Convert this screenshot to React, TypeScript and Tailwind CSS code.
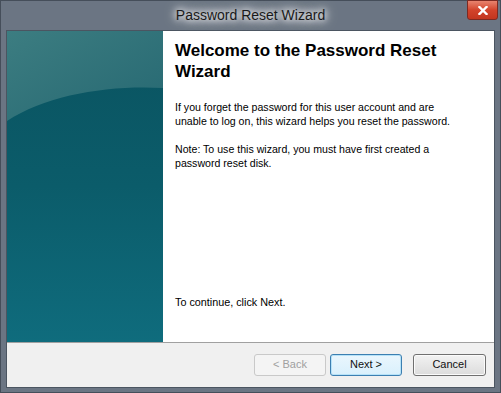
const ui = { fontFamily: '"Liberation Sans", Arial, sans-serif' };

function Btn({ label, disabled, focused }: { label: string; disabled?: boolean; focused?: boolean }) {
  return (
    <div
      className={
        'flex h-[22px] items-center justify-center rounded-[3px] border text-[11px] ' +
        (disabled
          ? 'border-[#c9c9c9] bg-[#f4f4f4] text-[#a0a0a0]'
          : focused
            ? 'border-[#3c7fb1] bg-gradient-to-b from-[#eaf6fd] to-[#d9f0fc] text-[#111] shadow-[inset_0_0_0_1px_#b6e2f8]'
            : 'border-[#707070] bg-gradient-to-b from-[#f2f2f2] to-[#dcdcdc] text-[#111] shadow-[inset_0_0_0_1px_#fbfbfb]')
      }
      style={{ width: label === 'Cancel' ? 73 : 72 }}
    >
      {label}
    </div>
  );
}

export default function App() {
  return (
    <div className="h-[393px] w-[501px] overflow-hidden bg-[#6b7583]" style={ui}>
      <div className="flex h-[393px] flex-col border border-[#454e5a]">
        {/* Title bar */}
        <div className="relative flex h-[29px] items-center justify-center">
          <span className="text-[14px] text-[#1a1a1a] [text-shadow:0_0_6px_#fff,0_0_10px_#fff,0_0_14px_#fff]">
            Password Reset Wizard
          </span>
          <div className="absolute right-[2px] top-[-1px] flex h-[20px] w-[31px] items-center justify-center rounded-b-[3px] border border-[#7d2a22] bg-gradient-to-b from-[#e8836e] via-[#d2432b] to-[#c3361f]">
            <svg width="10" height="9" viewBox="0 0 10 9">
              <path d="M1.5 1 L8.5 8 M8.5 1 L1.5 8" stroke="#fff" strokeWidth="2.4" strokeLinecap="square" />
            </svg>
          </div>
        </div>

        {/* Client area */}
        <div className="mx-[5px] mb-[4px] flex flex-1 flex-col border border-[#4b5561] bg-[#f0f0f0]">
          <div className="flex h-[311px] bg-white">
            <div className="relative w-[156px] overflow-hidden bg-gradient-to-b from-[#0a5360] via-[#0b5c6a] to-[#0f6c7d]">
              <svg className="absolute left-0 top-0" width="156" height="120" viewBox="0 0 156 120" preserveAspectRatio="none">
                <defs>
                  <linearGradient id="gl" x1="0" y1="0" x2="1" y2="1">
                    <stop offset="0" stopColor="#3c7d81" />
                    <stop offset="1" stopColor="#266872" />
                  </linearGradient>
                </defs>
                <path d="M0 0 H156 V57 C100 54 40 64 0 90 Z" fill="url(#gl)" />
              </svg>
            </div>
            <div className="flex flex-1 flex-col pl-[12px] pr-[10px] text-[#000]">
              <h1 className="mt-[9px] text-[17px] font-bold leading-[21px]">
                Welcome to the Password Reset
                <br />
                Wizard
              </h1>
              <p className="mt-[18px] text-[10.6px] leading-[14px]">
                If you forget the password for this user account and are
                <br />
                unable to log on, this wizard helps you reset the password.
              </p>
              <p className="mt-[14px] text-[10.6px] leading-[14px]">
                Note: To use this wizard, you must have first created a
                <br />
                password reset disk.
              </p>
              <p className="mt-auto mb-[33px] text-[10.8px] leading-[14px]">To continue, click Next.</p>
            </div>
          </div>
          <div className="h-[1px] bg-[#a0a0a0]" />
          <div className="flex flex-1 items-center justify-end gap-[4px] pb-[1px] pr-[8px]">
            <Btn label="< Back" disabled />
            <Btn label="Next >" focused />
            <div className="w-[3px]" />
            <Btn label="Cancel" />
          </div>
        </div>
      </div>
    </div>
  );
}
